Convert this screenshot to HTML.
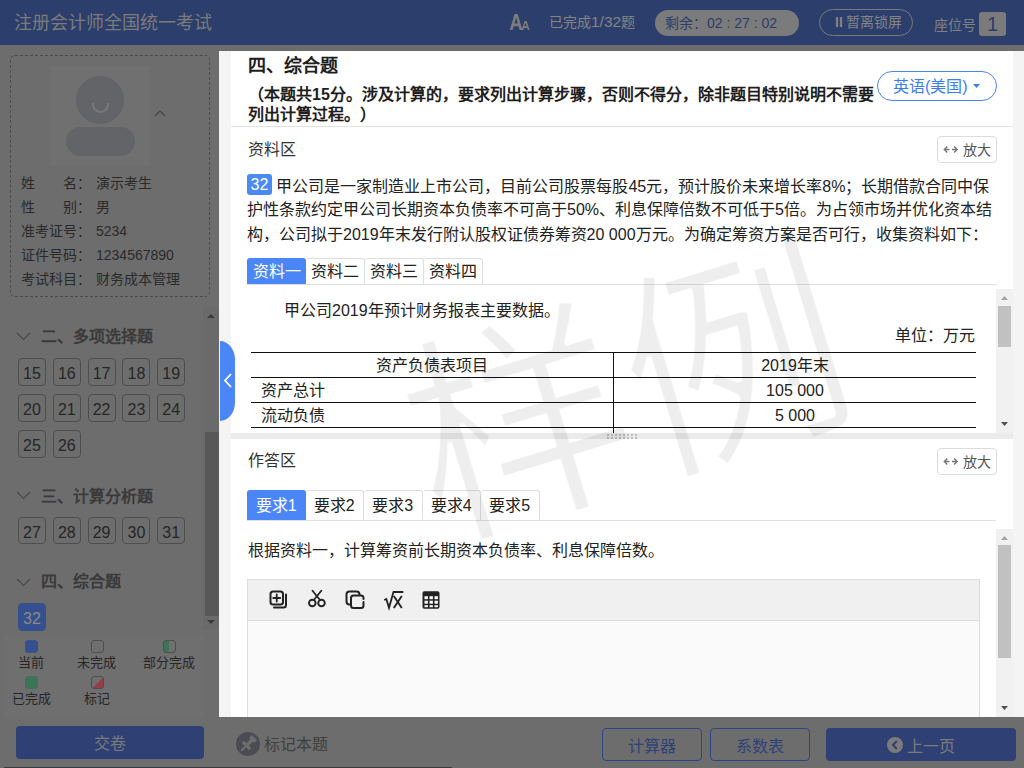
<!DOCTYPE html>
<html lang="zh-CN">
<head>
<meta charset="utf-8">
<style>
*{box-sizing:border-box;margin:0;padding:0}
html,body{text-spacing-trim:space-all;width:1024px;height:768px;overflow:hidden;background:#6d6d6d;font-family:"Liberation Sans",sans-serif;color:#222}
.abs{position:absolute}
#hdr{left:0;top:0;width:1024px;height:45px;background:#2c3e6c}
#sb{left:0;top:45px;width:219px;height:672px;background:#6d6d6d}
#bot{left:0;top:717px;width:1024px;height:51px;background:#6d6d6d}
#panel{left:219px;top:51px;width:805px;height:666px;background:#f4f4f4;overflow:hidden}
#card{left:12px;top:0;width:782px;height:666px;background:#fff}
.t{position:absolute;white-space:nowrap}
.qn{width:190px;font-size:0;line-height:0}
.qn span{display:inline-block;width:28px;height:27.6px;margin:0 6.8px 8.4px 0;border:1px solid #4e4e4e;border-radius:4px;font-size:16px;line-height:29px;text-align:center;color:#262626;vertical-align:top}
.qn span.cur{background:#36508f;border-color:#36508f;color:#8a8a8a}
.lg{width:13px;height:13px;border:1px solid #4e4e4e;border-radius:3px}
.tc{text-align:center;font-size:16px;line-height:22px;color:#222}
.lgt{font-size:13px;line-height:20px;color:#262626}
.zoom{width:60px;height:27px;border:1px solid #dcdcdc;border-radius:4px;font-size:14px;line-height:27px;color:#555;text-align:center;white-space:nowrap}
.badge{display:inline-block;width:25px;height:21.5px;background:#4a8af4;color:#fff;border-radius:3px;text-align:center;line-height:22px;font-size:16px;vertical-align:1.5px}
.tabs{font-size:0;white-space:nowrap}
.tabs span{display:inline-block;width:59px;height:26px;border:1px solid #dedede;border-bottom:none;border-left:none;border-radius:3px 3px 0 0;font-size:16px;line-height:26px;text-align:center;color:#222}
.tabs span:first-child{border-left:1px solid #dedede}
.tabs span.on{background:#4a86f7;border-color:#4a86f7;color:#fff}
.tabs2 span{height:30px;line-height:30px;width:58.5px}
</style>
</head>
<body>
<!-- HEADER -->
<div id="hdr" class="abs">
  <div class="t" style="left:14px;top:11px;font-size:18px;line-height:24px;color:#7b7b7b">注册会计师全国统一考试</div>
  <svg class="abs" style="left:509px;top:13px" width="22" height="18" viewBox="0 0 22 18"><path d="M0.8 17 L5.6 1 L8.6 1 L13.4 17 L10.6 17 L9.5 13.2 L4.7 13.2 L3.6 17Z M5.4 10.6 L8.8 10.6 L7.1 4.6Z" fill="#7d7d7d" fill-rule="evenodd"/><path d="M12.6 17 L15.6 8 L17.6 8 L20.6 17 L18.9 17 L18.3 15 L14.9 15 L14.3 17Z M15.4 13.2 L17.8 13.2 L16.6 9.8Z" fill="#7d7d7d" fill-rule="evenodd"/></svg>
  <div class="t" style="left:549px;top:12px;font-size:14px;line-height:20px;color:#858585">已完成<span style="font-size:15.5px">1/32</span>题</div>
  <div class="abs" style="left:655px;top:10px;width:144px;height:26px;border-radius:13px;background:#7b7b7b"></div>
  <div class="t" style="left:665px;top:13px;font-size:14px;line-height:20px;color:#2c3e6c">剩余：02 : 27 : 02</div>
  <div class="abs" style="left:819px;top:9px;width:94px;height:27px;border-radius:14px;border:1px solid #7a7a7a"></div>
  <div class="t" style="left:835px;top:12px;font-size:14px;line-height:20px;color:#858585"><b style="font-weight:bold;margin-right:3px">II</b>暂离锁屏</div>
  <div class="t" style="left:934px;top:15px;font-size:14px;line-height:20px;color:#808080">座位号</div>
  <div class="abs" style="left:979px;top:12px;width:27px;height:24px;border-radius:3px;background:#7b7b7b"></div>
  <div class="t" style="left:979px;top:12px;width:27px;text-align:center;font-size:20px;line-height:24px;color:#2c3e6c">1</div>
</div>

<!-- SIDEBAR -->
<div id="sb" class="abs">
  <div class="abs" style="left:10px;top:10px;width:200px;height:242px;border:1px dashed #4a4a4a;border-radius:5px"></div>
  <div class="abs" style="left:50px;top:21px;width:100px;height:99px;background:#707070"></div>
  <div class="abs" style="left:76px;top:31px;width:48px;height:48px;border-radius:50%;background:#636468"></div>
  <div class="abs" style="left:92px;top:58px;width:17px;height:10px;border:2.5px solid #787878;border-top:none;border-radius:0 0 9px 9px"></div>
  <div class="abs" style="left:66px;top:82px;width:69px;height:29px;border-radius:15px;background:#636468"></div>
  <svg class="abs" style="left:154px;top:64px" width="12" height="8" viewBox="0 0 12 8"><path d="M1 7 L6 2 L11 7" fill="none" stroke="#4a4a4a" stroke-width="1.5"/></svg>
  <div class="abs sbinfo" style="left:21px;top:125.8px;font-size:14px;line-height:24px;color:#2a2a2a">
    <div><span style="display:inline-block;width:56px;text-align-last:justify">姓名</span>：<span style="margin-left:5px">演示考生</span></div>
    <div><span style="display:inline-block;width:56px;text-align-last:justify">性别</span>：<span style="margin-left:5px">男</span></div>
    <div><span style="display:inline-block;width:56px">准考证号</span>：<span style="margin-left:5px">5234</span></div>
    <div><span style="display:inline-block;width:56px">证件号码</span>：<span style="margin-left:5px">1234567890</span></div>
    <div><span style="display:inline-block;width:56px">考试科目</span>：<span style="margin-left:5px">财务成本管理</span></div>
  </div>
  <!-- scrollbar -->
  <div class="abs" style="left:203px;top:262px;width:16px;height:323px;background:#6a6a6a"></div>
  <div class="abs" style="left:205px;top:387px;width:14px;height:184px;background:#585858"></div>
  <svg class="abs" style="left:206px;top:268px" width="10" height="6"><path d="M1 5 L5 1 L9 5Z" fill="#3a3a3a"/></svg>
  <svg class="abs" style="left:206px;top:574px" width="10" height="6"><path d="M1 1 L5 5 L9 1Z" fill="#3a3a3a"/></svg>
  <!-- sections -->
  <svg class="abs" style="left:16px;top:287px" width="16" height="9"><path d="M1 1 L7.5 7.5 L14 1" fill="none" stroke="#4a4a4a" stroke-width="1.2"/></svg>
  <div class="t" style="left:41px;top:281px;font-size:16px;line-height:22px;font-weight:bold;color:#3a3a3a">二、多项选择题</div>
  <div class="abs qn" style="left:18px;top:313px">
    <span>15</span><span>16</span><span>17</span><span>18</span><span>19</span><br>
    <span>20</span><span>21</span><span>22</span><span>23</span><span>24</span><br>
    <span>25</span><span>26</span>
  </div>
  <svg class="abs" style="left:16px;top:446px" width="16" height="9"><path d="M1 1 L7.5 7.5 L14 1" fill="none" stroke="#4a4a4a" stroke-width="1.2"/></svg>
  <div class="t" style="left:41px;top:440.5px;font-size:16px;line-height:22px;font-weight:bold;color:#3a3a3a">三、计算分析题</div>
  <div class="abs qn" style="left:18px;top:471.5px">
    <span>27</span><span>28</span><span>29</span><span>30</span><span>31</span>
  </div>
  <svg class="abs" style="left:16px;top:532.5px" width="16" height="9"><path d="M1 1 L7.5 7.5 L14 1" fill="none" stroke="#4a4a4a" stroke-width="1.2"/></svg>
  <div class="t" style="left:41px;top:526px;font-size:16px;line-height:22px;font-weight:bold;color:#3a3a3a">四、综合题</div>
  <div class="abs qn" style="left:18px;top:558px">
    <span class="cur">32</span>
  </div>
  <!-- legend -->
  <div class="abs" style="left:4px;top:592px;width:199px;height:80px;background:#6f6f6f"></div>
  <div class="abs lg" style="left:25px;top:595px;background:#36508f;border-color:#36508f"></div>
  <div class="abs lg" style="left:91px;top:595px"></div>
  <div class="abs lg" style="left:163px;top:595px;background:linear-gradient(90deg,#3b7457 50%,transparent 50%)"></div>
  <div class="abs lg" style="left:25px;top:631px;background:#3b7457;border-color:#3b7457"></div>
  <div class="abs lg" style="left:91px;top:631px;background:linear-gradient(135deg,transparent 50%,#963e48 50%)"></div>
  <div class="t lgt" style="left:18px;top:608px">当前</div>
  <div class="t lgt" style="left:77px;top:608px">未完成</div>
  <div class="t lgt" style="left:143px;top:608px">部分完成</div>
  <div class="t lgt" style="left:12px;top:644px">已完成</div>
  <div class="t lgt" style="left:84px;top:644px">标记</div>
</div>

<!-- BOTTOM -->
<div id="bot" class="abs">
  <div class="abs" style="left:16px;top:9px;width:188px;height:33px;border-radius:4px;background:#2f4174"></div>
  <div class="t" style="left:16px;top:10px;width:188px;text-align:center;font-size:16px;line-height:33px;color:#7b7b7b">交卷</div>
  <svg class="abs" style="left:236px;top:15px" width="24" height="24" viewBox="0 0 24 24"><circle cx="12" cy="12" r="12" fill="#4b4c53"/>
    <g stroke="#6e6e6e" stroke-linecap="butt" fill="none">
      <path d="M14.5 4.5 L19.5 9.5" stroke-width="4"/>
      <path d="M17 7 L11.5 12.5" stroke-width="3.5"/>
      <path d="M6.8 9.8 L14.2 17.2" stroke-width="3.2"/>
      <path d="M10 14 L5.8 18.2" stroke-width="2.2" stroke-linecap="round"/>
    </g></svg>
  <div class="t" style="left:264px;top:18px;font-size:16px;line-height:20px;color:#3f3f3f">标记本题</div>
  <div class="abs" style="left:602px;top:11px;width:100px;height:33px;border-radius:4px;border:1px solid #2d4784"></div>
  <div class="t" style="left:602px;top:12.5px;width:100px;text-align:center;font-size:16px;line-height:33px;color:#2d4378">计算器</div>
  <div class="abs" style="left:710px;top:11px;width:100px;height:33px;border-radius:4px;border:1px solid #2d4784"></div>
  <div class="t" style="left:710px;top:12.5px;width:100px;text-align:center;font-size:16px;line-height:33px;color:#2d4378">系数表</div>
  <div class="abs" style="left:826px;top:11px;width:190px;height:33px;border-radius:4px;background:#2f4174"></div>
  <svg class="abs" style="left:887px;top:19.8px" width="16" height="16" viewBox="0 0 16 16"><circle cx="8" cy="8" r="8" fill="#7b7b7b"/><path d="M9.8 4 L6 8 L9.8 12" fill="none" stroke="#2f4174" stroke-width="2"/></svg>
  <div class="t" style="left:907px;top:12.5px;font-size:16px;line-height:33px;color:#7b7b7b">上一页</div>
  <div class="abs" style="left:4px;top:50px;width:448px;height:1px;background:#3a3a3a"></div>
</div>

<!-- PANEL -->
<div id="panel" class="abs">
  <div id="card" class="abs"></div>
  <!-- title area (coords relative to panel: x-219, y-51) -->
  <div class="t" style="left:29px;top:3px;font-size:18px;line-height:24px;font-weight:bold;color:#1e1e1e">四、综合题</div>
  <div class="abs" style="left:29px;top:33.5px;width:632px;font-size:16px;line-height:20px;font-weight:bold;color:#1e1e1e">（本题共15分。涉及计算的，要求列出计算步骤，否则不得分，除非题目特别说明不需要列出计算过程。）</div>
  <div class="abs" style="left:658px;top:20px;width:120px;height:30px;border:1px solid #4a86f0;border-radius:15px"></div>
  <div class="t" style="left:674px;top:25.7px;font-size:16px;line-height:20px;color:#3d7cf0">英语(美国)</div>
  <svg class="abs" style="left:754px;top:33px" width="7" height="4"><path d="M0 0 L7 0 L3.5 4Z" fill="#3d7cf0"/></svg>
  <div class="abs" style="left:12px;top:75px;width:782px;height:1px;background:#e3e3e3"></div>

  <!-- material area -->
  <div class="t" style="left:29px;top:88px;font-size:16px;line-height:22px;color:#333">资料区</div>
  <div class="abs zoom" style="left:718px;top:85px"><svg width="16" height="9" viewBox="0 0 16 9" style="margin-right:4px;vertical-align:1.5px"><path d="M4.3 1.5 L1.3 4.5 L4.3 7.5 M1.5 4.5 L6.5 4.5 M9 4.5 L14 4.5 M11.2 1.5 L14.2 4.5 L11.2 7.5" fill="none" stroke="#777" stroke-width="1.4"/></svg>放大</div>
  <div class="abs" style="left:28px;top:122.6px;width:746px;font-size:16px;line-height:24.3px;color:#222"><span class="badge">32</span> 甲公司是一家制造业上市公司，目前公司股票每股45元，预计股价未来增长率8%；长期借款合同中保护性条款约定甲公司长期资本负债率不可高于50%、利息保障倍数不可低于5倍。为占领市场并优化资本结构，公司拟于2019年末发行附认股权证债券筹资20 000万元。为确定筹资方案是否可行，收集资料如下：</div>
  <div class="abs tabs" style="left:28px;top:207px"><span class="on">资料一</span><span>资料二</span><span>资料三</span><span>资料四</span></div>
  <div class="abs" style="left:28px;top:233px;width:750px;height:1px;background:#e0e0e0"></div>
  <!-- material scroll content -->
  <div class="abs" style="left:28px;top:238px;width:749px;height:144px;overflow:hidden">
    <div class="t" style="left:37px;top:11px;font-size:16px;line-height:22px;color:#222">甲公司2019年预计财务报表主要数据。</div>
    <div class="t" style="right:21px;top:35.5px;font-size:16px;line-height:22px;color:#222">单位：万元</div>
    <div class="abs" style="left:4px;top:63px;width:725px;height:1px;background:#111"></div>
    <div class="abs" style="left:4px;top:88px;width:725px;height:1px;background:#111"></div>
    <div class="abs" style="left:4px;top:113px;width:725px;height:1px;background:#111"></div>
    <div class="abs" style="left:4px;top:138px;width:725px;height:1px;background:#111"></div>
    <div class="abs" style="left:366px;top:63px;width:1px;height:90px;background:#111"></div>
    <div class="t tc" style="left:4px;top:65.8px;width:362px">资产负债表项目</div>
    <div class="t tc" style="left:367px;top:65.8px;width:362px">2019年末</div>
    <div class="t" style="left:14px;top:90.5px;font-size:16px;line-height:22px;color:#222">资产总计</div>
    <div class="t tc" style="left:367px;top:90.5px;width:362px">105 000</div>
    <div class="t" style="left:14px;top:116.3px;font-size:16px;line-height:22px;color:#222">流动负债</div>
    <div class="t tc" style="left:367px;top:116.3px;width:362px">5 000</div>
  </div>
  <div class="abs" style="left:12px;top:382px;width:782px;height:6px;background:#ebebeb"></div>
  <svg class="abs" style="left:388px;top:383px" width="32" height="5">
    <g fill="#bdbdbd"><rect x="0" y="0" width="2" height="2"/><rect x="0" y="3" width="2" height="2"/><rect x="4" y="0" width="2" height="2"/><rect x="4" y="3" width="2" height="2"/><rect x="8" y="0" width="2" height="2"/><rect x="8" y="3" width="2" height="2"/><rect x="12" y="0" width="2" height="2"/><rect x="12" y="3" width="2" height="2"/><rect x="16" y="0" width="2" height="2"/><rect x="16" y="3" width="2" height="2"/><rect x="20" y="0" width="2" height="2"/><rect x="20" y="3" width="2" height="2"/><rect x="24" y="0" width="2" height="2"/><rect x="24" y="3" width="2" height="2"/><rect x="28" y="0" width="2" height="2"/><rect x="28" y="3" width="2" height="2"/></g>
  </svg>
  <div class="abs" style="left:777px;top:238px;width:17px;height:144px;background:#f1f1f1"></div>
  <div class="abs" style="left:779px;top:255px;width:13px;height:41px;background:#c1c1c1"></div>
  <svg class="abs" style="left:782px;top:245px" width="7" height="4"><path d="M0 4 L3.5 0 L7 4Z" fill="#a3a3a3"/></svg>
  <svg class="abs" style="left:782px;top:370.5px" width="7" height="4"><path d="M0 0 L3.5 4 L7 0Z" fill="#505050"/></svg>

  <!-- answer area -->
  <div class="t" style="left:29px;top:399px;font-size:16px;line-height:22px;color:#333">作答区</div>
  <div class="abs zoom" style="left:718px;top:397px"><svg width="16" height="9" viewBox="0 0 16 9" style="margin-right:4px;vertical-align:1.5px"><path d="M4.3 1.5 L1.3 4.5 L4.3 7.5 M1.5 4.5 L6.5 4.5 M9 4.5 L14 4.5 M11.2 1.5 L14.2 4.5 L11.2 7.5" fill="none" stroke="#777" stroke-width="1.4"/></svg>放大</div>
  <div class="abs tabs tabs2" style="left:28px;top:439px"><span class="on">要求1</span><span>要求2</span><span>要求3</span><span>要求4</span><span>要求5</span></div>
  <div class="abs" style="left:28px;top:469px;width:749px;height:1px;background:#e0e0e0"></div>
  <div class="t" style="left:29px;top:489px;font-size:16px;line-height:22px;color:#222">根据资料一，计算筹资前长期资本负债率、利息保障倍数。</div>
  <div class="abs" style="left:28px;top:528px;width:733px;height:160px;border:1px solid #ddd;background:#fafafa"></div>
  <div class="abs" style="left:28px;top:528px;width:733px;height:42px;border:1px solid #ddd;background:#f0f0f0"></div>
  <svg class="abs" style="left:48px;top:535.5px" width="180" height="24" viewBox="0 0 180 24">
    <g fill="none" stroke="#222" stroke-width="2" stroke-linecap="round" stroke-linejoin="round">
      <!-- icon1: add -->
      <rect x="3.5" y="4.5" width="12.5" height="13" rx="2.5"/>
      <path d="M19 7.5 L19 18 Q19 20.5 16.5 20.5 L7 20.5"/>
      <path d="M9.75 7.5 L9.75 14.5 M6.25 11 L13.25 11" stroke-width="1.8"/>
      <!-- icon2: scissors -->
      <path d="M45.5 3.8 L53 13 M54.3 3.8 L46.8 13" stroke-width="1.8"/>
      <circle cx="45.3" cy="16" r="3.3" stroke-width="1.9"/>
      <circle cx="54.5" cy="16" r="3.3" stroke-width="1.9"/>
      <!-- icon3: copy -->
      <path d="M82.5 17.5 Q79.5 17.5 79.5 14.5 L79.5 7.5 Q79.5 4.5 82.5 4.5 L89.5 4.5 Q92.5 4.5 92.5 7.5"/>
      <path d="M96.5 15 L96.5 18.5 Q96.5 21 94 21 L86.5 21 Q84 21 84 18.5 L84 11 Q84 8.5 86.5 8.5 L94 8.5 Q96.5 8.5 96.5 11 L96.5 12"/>
      <!-- icon5: table -->
      <rect x="175.5" y="4.5" width="-0" height="0"/>
    </g>
    <!-- icon4: sqrt x -->
    <path d="M117.2 13 L119.3 12 L122 20.8 L126.5 5 L136.3 5" fill="none" stroke="#222" stroke-width="1.8" stroke-linejoin="miter"/>
    <path d="M126.8 9 L134.8 21 M134.8 9 L126.8 21" fill="none" stroke="#222" stroke-width="1.9"/>
    <!-- icon5 table -->
    <rect x="155.5" y="4.2" width="17" height="17.5" rx="1.8" fill="#222"/>
    <g fill="#fafafa">
      <rect x="157.5" y="9.2" width="3.4" height="3"/><rect x="162.5" y="9.2" width="3.4" height="3"/><rect x="167.5" y="9.2" width="3.4" height="3"/>
      <rect x="157.5" y="13.7" width="3.4" height="3"/><rect x="162.5" y="13.7" width="3.4" height="3"/><rect x="167.5" y="13.7" width="3.4" height="3"/>
      <rect x="157.5" y="18.2" width="3.4" height="2"/><rect x="162.5" y="18.2" width="3.4" height="2"/><rect x="167.5" y="18.2" width="3.4" height="2"/>
    </g>
  </svg>
  <div class="abs" style="left:777px;top:478px;width:17px;height:188px;background:#f1f1f1"></div>
  <div class="abs" style="left:779px;top:494px;width:13px;height:113px;background:#c1c1c1"></div>
  <svg class="abs" style="left:782px;top:484.5px" width="7" height="4"><path d="M0 4 L3.5 0 L7 4Z" fill="#a3a3a3"/></svg>
  <svg class="abs" style="left:782px;top:654.8px" width="7" height="4"><path d="M0 0 L3.5 4 L7 0Z" fill="#505050"/></svg>

  <!-- watermark -->
  <svg width="0" height="0" style="position:absolute"><filter id="er"><feMorphology operator="erode" radius="2"/></filter></svg>
  <div class="abs" style="left:159px;top:195px;width:500px;height:300px;transform:rotate(-17deg);filter:url(#er)">
    <div class="t" style="left:0;top:0;width:500px;text-align:center;font-size:225px;line-height:300px;color:rgba(0,0,0,0.065);letter-spacing:0">样例</div>
  </div>
  <!-- collapse tab -->
  <div class="abs" style="left:1px;top:290px;width:15px;height:80px;background:#4a86f7;border-radius:0 16px 16px 0/0 20px 20px 0"></div>
  <svg class="abs" style="left:4px;top:322px" width="10" height="15"><path d="M8 1 L2 7.5 L8 14" fill="none" stroke="#fff" stroke-width="1.8"/></svg>
</div>
</body>
</html>
